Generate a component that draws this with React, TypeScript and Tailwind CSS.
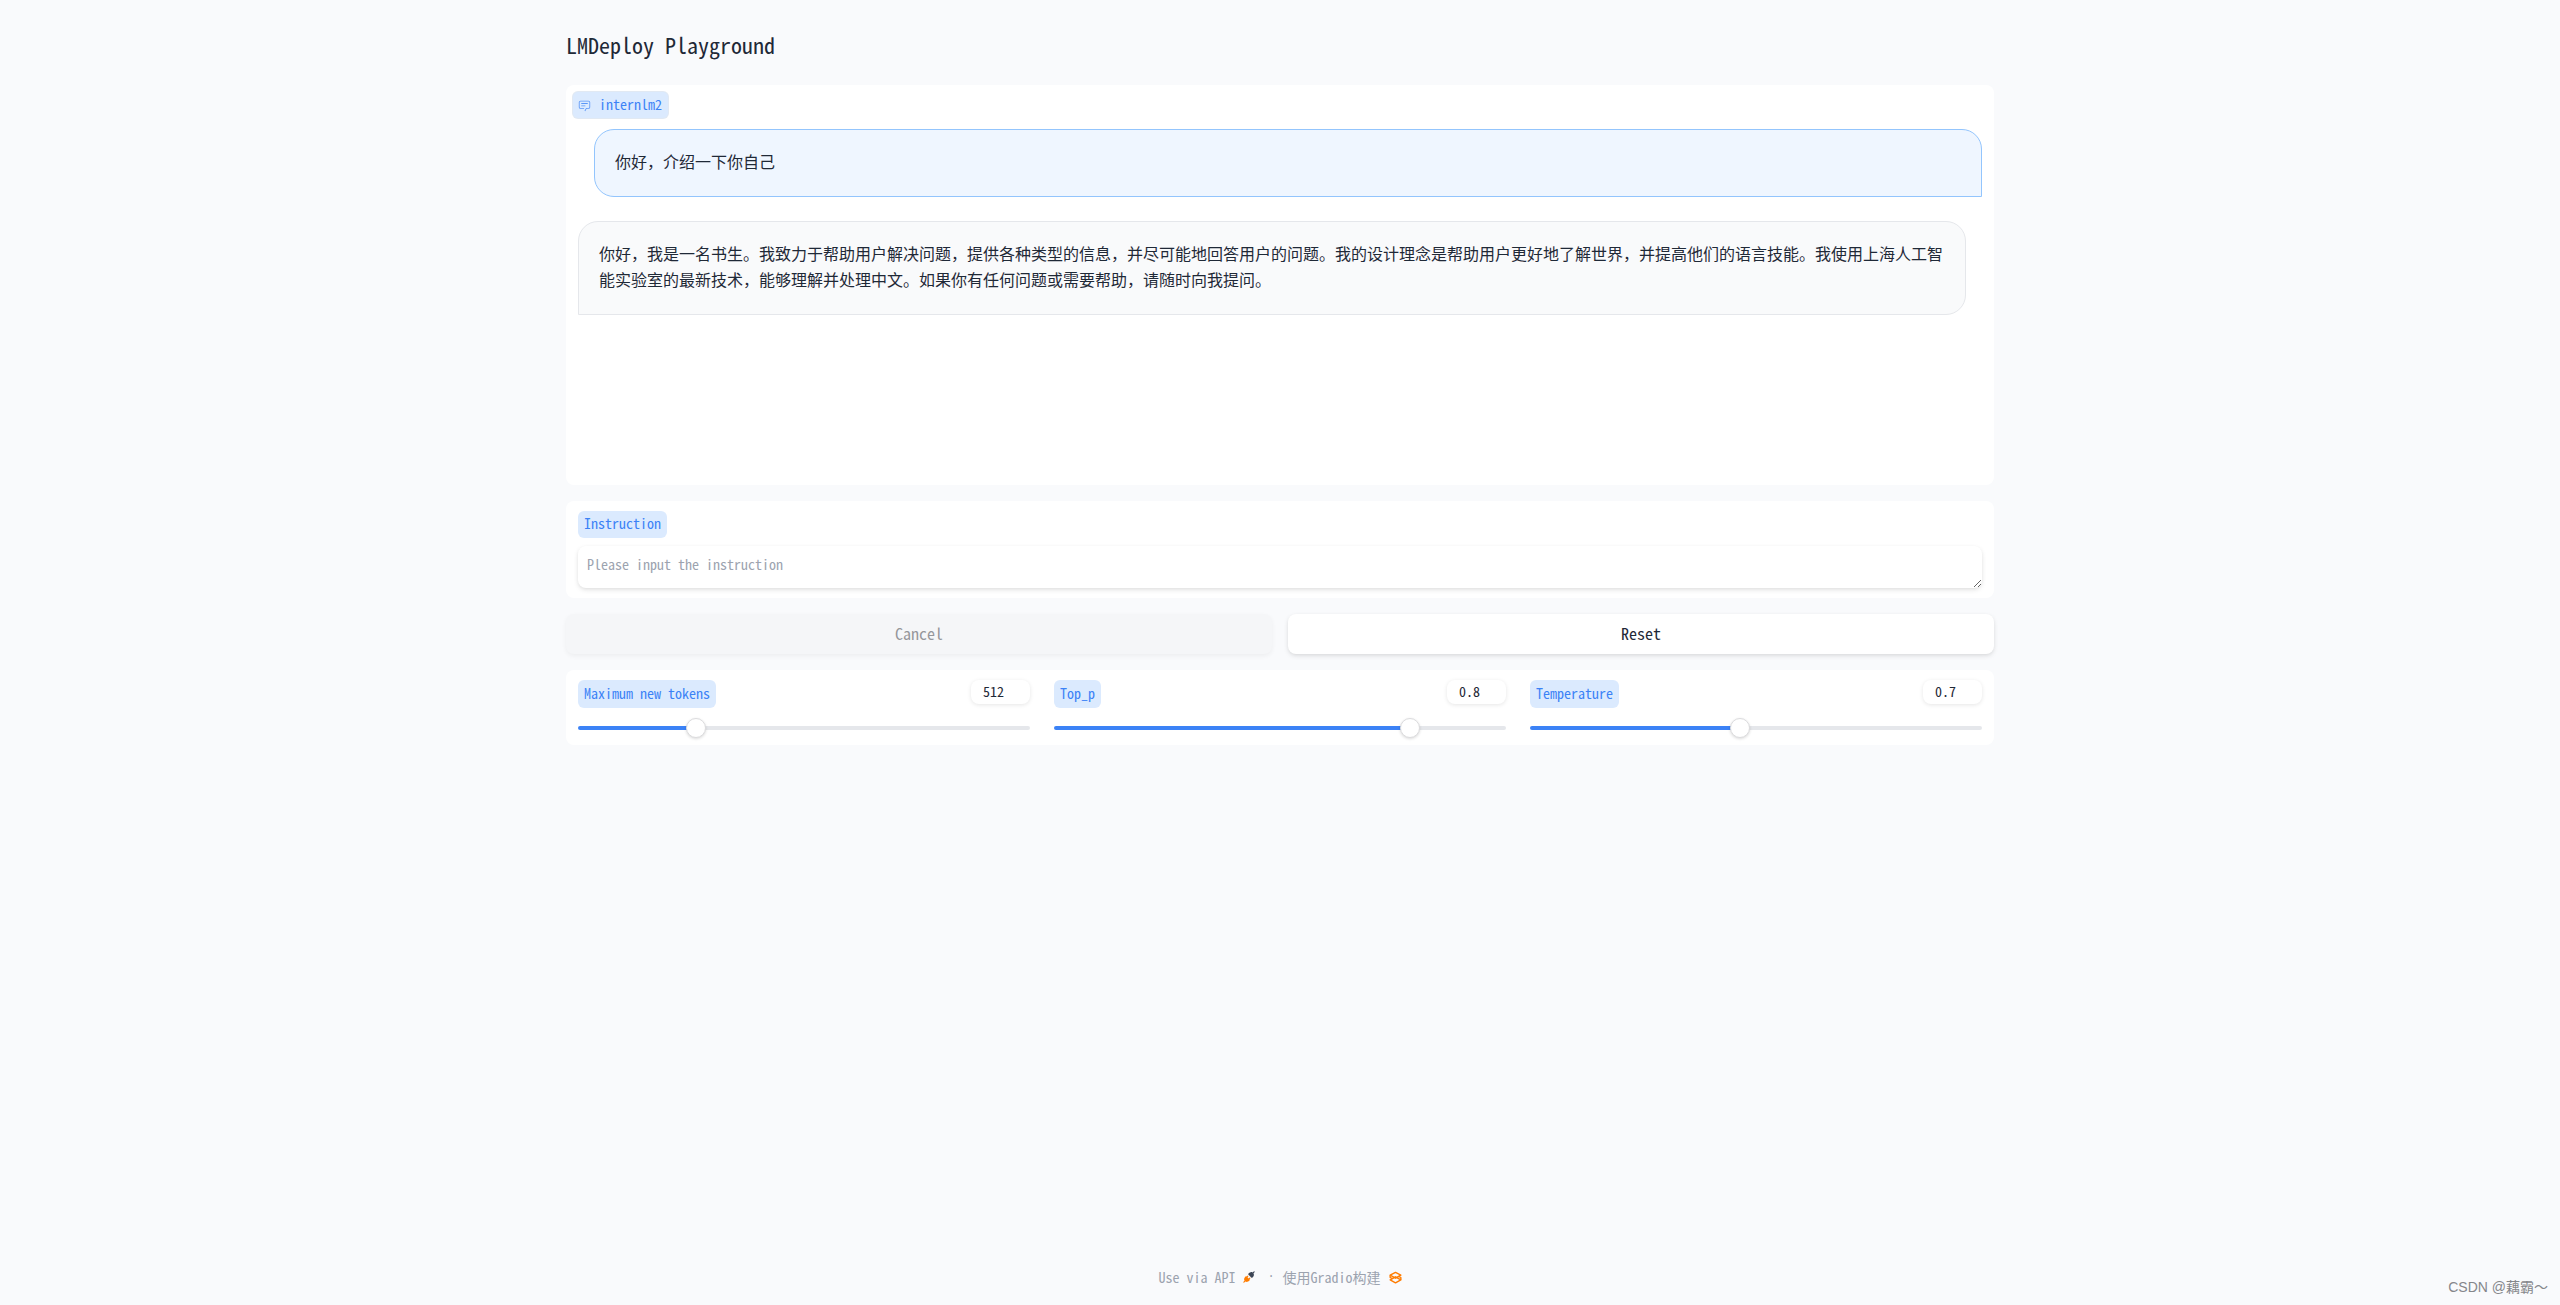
import { useState } from "react";

const messages = [
  { role: "user", text: "你好，介绍一下你自己" },
  {
    role: "bot",
    text: "你好，我是一名书生。我致力于帮助用户解决问题，提供各种类型的信息，并尽可能地回答用户的问题。我的设计理念是帮助用户更好地了解世界，并提高他们的语言技能。我使用上海人工智能实验室的最新技术，能够理解并处理中文。如果你有任何问题或需要帮助，请随时向我提问。",
  },
];

const sliders = [
  { id: "tokens", label: "Maximum new tokens", min: 1, max: 2048, step: 1, value: 512 },
  { id: "top_p", label: "Top_p", min: 0, max: 1, step: 0.01, value: 0.8 },
  { id: "temperature", label: "Temperature", min: 0.01, max: 1.5, step: 0.01, value: 0.7 },
];

function ChatIcon() {
  return (
    <svg viewBox="0 0 32 32" className="size-[13px] opacity-80" fill="currentColor" aria-hidden="true">
      <path d="M17.74 30L16 29l4-7h6a2 2 0 0 0 2-2V8a2 2 0 0 0-2-2H6a2 2 0 0 0-2 2v12a2 2 0 0 0 2 2h9v2H6a4 4 0 0 1-4-4V8a4 4 0 0 1 4-4h20a4 4 0 0 1 4 4v12a4 4 0 0 1-4 4h-4.84Z" />
      <path d="M8 10h16v2H8zm0 6h10v2H8z" />
    </svg>
  );
}

function RocketIcon() {
  return (
    <svg viewBox="0 0 28 28" className="size-3" aria-hidden="true">
      <path
        fill="#3c4555"
        d="M26.94 2.94c.52-.52.52-1.36 0-1.88-.52-.52-1.36-.52-1.88 0l-2.49 2.48c-1.45-.95-3.03-1.11-4.4-.9-1.62.25-3.06 1.03-3.78 1.75l-2 2c-.52.52-.52 1.37 0 1.89l7.33 7.33c.52.52 1.37.52 1.89 0l2-2c.72-.72 1.5-2.16 1.75-3.79.21-1.36.05-2.94-.9-4.39l2.48-2.49Z"
      />
      <path
        fill="#ff7c00"
        d="M12.28 12.94c.52-.52.52-1.36 0-1.88-.52-.52-1.37-.52-1.89 0l-1.72 1.72-.39-.39c-.52-.52-1.37-.52-1.89 0l-2 2c-.72.72-1.5 2.16-1.75 3.79-.21 1.36-.05 2.94.9 4.39l-2.48 2.49c-.52.52-.52 1.36 0 1.88.52.52 1.36.52 1.88 0l2.49-2.48c1.45.95 3.03 1.11 4.39.9 1.63-.25 3.07-1.03 3.79-1.75l2-2c.52-.52.52-1.37 0-1.89l-.39-.39 1.72-1.72c.52-.52.52-1.37 0-1.89-.52-.52-1.36-.52-1.88 0l-1.73 1.73-2.78-2.78 1.73-1.73Z"
      />
    </svg>
  );
}

function GradioIcon() {
  return (
    <svg viewBox="0 0 28 28" className="size-[13px]" fill="none" stroke="#ff7c00" strokeWidth="3" strokeLinejoin="round" aria-hidden="true">
      <path d="M14 3 25.500 9 14 15.500 2.500 9Z" />
      <path d="M14 12.500 25.500 19 14 25.500 2.500 19Z" />
      <path d="M2.500 9v5l5 2.500M25.500 19v-5l-5-2.500" />
    </svg>
  );
}

function SliderField({ id, label, min, max, step, value: initial }: (typeof sliders)[number]) {
  const [value, setValue] = useState(initial);
  const percent = ((value - min) / (max - min)) * 100;

  return (
    <div>
      <div className="flex items-start justify-between">
        <label htmlFor={id} className="rounded-md bg-[#dbeafe] px-1.5 pb-0.5 text-sm leading-[26px] text-[#3b82f6]">
          {label}
        </label>
        <input
          type="number"
          aria-label={`${label} value`}
          className="h-6 w-[59px] rounded-lg bg-white px-3 pb-0.5 text-sm text-[#1f2937] shadow-[0_1px_4px_rgba(0,0,0,0.1)] outline-none [appearance:textfield] [&::-webkit-inner-spin-button]:appearance-none"
          min={min}
          max={max}
          step={step}
          value={value}
          onChange={(e) => setValue(Number(e.target.value))}
        />
      </div>
      <input
        id={id}
        type="range"
        className="mt-[18px] block h-1 w-full cursor-pointer appearance-none rounded-sm outline-none [&::-webkit-slider-thumb]:size-5 [&::-webkit-slider-thumb]:appearance-none [&::-webkit-slider-thumb]:rounded-full [&::-webkit-slider-thumb]:border [&::-webkit-slider-thumb]:border-[#dcdcde] [&::-webkit-slider-thumb]:bg-white [&::-webkit-slider-thumb]:shadow-[0_1px_3px_rgba(0,0,0,0.15)]"
        style={{ background: `linear-gradient(to right, #3b82f6 ${percent}%, #e5e7eb ${percent}%)` }}
        min={min}
        max={max}
        step={step}
        value={value}
        onChange={(e) => setValue(Number(e.target.value))}
      />
    </div>
  );
}

export default function App() {
  const [instruction, setInstruction] = useState("");

  return (
    <div className="relative flex min-h-screen flex-col bg-[#f9fafc] font-['Noto_Sans_Mono_CJK_SC','Noto_Sans_CJK_SC',monospace] text-[#1f2937]">
      <main className="mx-auto flex w-full max-w-[1492px] grow flex-col gap-4 px-8 pt-[30px]">
        <h1 className="mb-[11px] text-[22px] leading-7">LMDeploy Playground</h1>

        <section className="min-h-[400px] rounded-lg bg-white px-3 pt-1.5 pb-3">
          <div className="-ml-1.5 flex h-7 w-fit items-center gap-2 rounded-md border border-[#e5e7eb]/60 bg-[#dbeafe] pr-1.5 pl-[5px] text-sm text-[#3b82f6]">
            <ChatIcon />
            <span className="pb-0.5">internlm2</span>
          </div>
          <div className="mt-2.5 flex flex-col gap-6 font-['Noto_Sans_CJK_SC',sans-serif] text-base leading-[26px]">
            {messages.map((m) => (
              <p
                key={m.role}
                className={
                  m.role === "user"
                    ? "ml-4 rounded-[20px] rounded-br-none border border-[#93c5fd] bg-[#eff6ff] px-5 pt-[18px] pb-[22px]"
                    : "mr-4 rounded-[20px] rounded-bl-none border border-[#e5e7eb] bg-[#f9fafb] px-5 pt-[18px] pb-[22px]"
                }
              >
                {m.text}
              </p>
            ))}
          </div>
        </section>

        <section className="rounded-lg bg-white px-3 py-2.5">
          <label htmlFor="instruction" className="block w-fit rounded-md bg-[#dbeafe] px-1.5 pb-0.5 text-sm leading-[25px] text-[#3b82f6]">
            Instruction
          </label>
          <textarea
            id="instruction"
            className="mt-2 block h-[42px] w-full resize rounded-lg bg-white px-[9px] py-2 text-sm shadow-[0_2px_5px_rgba(0,0,0,0.1),0_1px_3px_rgba(0,0,0,0.04)] outline-none placeholder:text-[#9ca3af]"
            placeholder="Please input the instruction"
            value={instruction}
            onChange={(e) => setInstruction(e.target.value)}
          />
        </section>

        <div className="grid grid-cols-2 gap-4">
          <button disabled className="h-10 rounded-lg bg-[#f5f6f8] pb-0.5 text-base text-[#95979b] shadow-[0_2px_5px_rgba(0,0,0,0.05)]">
            Cancel
          </button>
          <button className="h-10 rounded-lg bg-white pb-0.5 text-base shadow-[0_2px_5px_rgba(0,0,0,0.1),0_1px_3px_rgba(0,0,0,0.04)]">
            Reset
          </button>
        </div>

        <section className="grid grid-cols-3 gap-6 rounded-lg bg-white px-3 pt-2.5 pb-[15px]">
          {sliders.map((s) => (
            <SliderField key={s.id} {...s} />
          ))}
        </section>
      </main>

      <footer className="flex items-center justify-center pt-8 pb-[18px] text-sm text-[#9ca3af]">
        <a href="#api" className="flex items-center gap-2">
          Use via API
          <RocketIcon />
        </a>
        <span className="mr-2 ml-3 font-['Liberation_Mono',monospace] text-xs">·</span>
        <a href="#gradio" className="flex items-center gap-2">
          使用Gradio构建
          <GradioIcon />
        </a>
      </footer>

      <span className="absolute right-3 bottom-2 font-['Liberation_Sans','Noto_Sans_CJK_SC',sans-serif] text-sm text-[#85878b]">
        CSDN @藕霸～
      </span>
    </div>
  );
}
